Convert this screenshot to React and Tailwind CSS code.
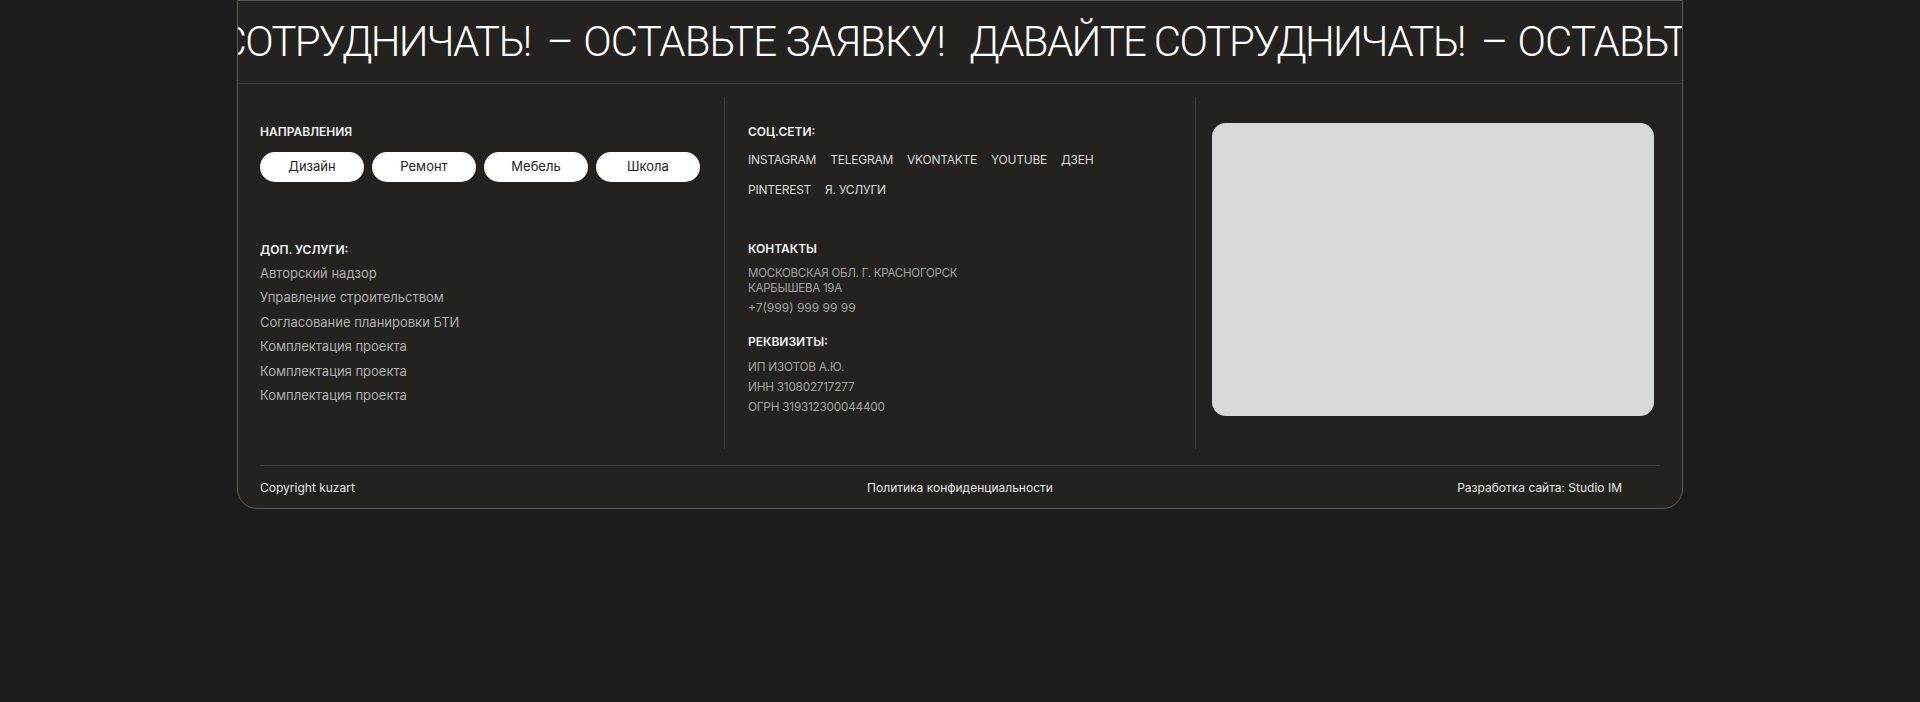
import React from "react";

const directions = ["Дизайн", "Ремонт", "Мебель", "Школа"];

const services = [
    "Авторский надзор",
    "Управление строительством",
    "Согласование планировки БТИ",
    "Комплектация проекта",
    "Комплектация проекта",
    "Комплектация проекта",
];

const socialsTop = ["INSTAGRAM", "TELEGRAM", "VKONTAKTE", "YOUTUBE", "ДЗЕН"];
const socialsBottom = ["PINTEREST", "Я. УСЛУГИ"];

const requisites = ["ИП ИЗОТОВ А.Ю.", "ИНН 310802717277", "ОГРН 319312300044400"];

// одна "петля" бегущей строки
const TickerChunk = () => (
    <div className="flex items-center shrink-0 pr-[26px]">
        <span className="whitespace-nowrap">ДАВАЙТЕ СОТРУДНИЧАТЬ!</span>
        <span className="ml-[16px] mr-[11px]">–</span>
        <span className="whitespace-nowrap w-[360px] tracking-[-0.02em]">ОСТАВЬТЕ ЗАЯВКУ!</span>
    </div>
);

const App = () => {
    return (
        <div className="min-h-screen bg-[#1b1c1b] font-['Inter',sans-serif]">
            <footer className="w-[1446px] mx-auto bg-[#23221f] border border-[#5a5a58] rounded-b-[20px] overflow-hidden">
                {/* бегущая строка */}
                <div className="h-[83px] border-b border-[#3a3936] overflow-hidden flex items-center">
                    <div className="flex -ml-[203px] text-white font-['Roboto',sans-serif] font-light text-[42px] tracking-[-0.04em] leading-none">
                        <TickerChunk />
                        <TickerChunk />
                        <TickerChunk />
                    </div>
                </div>

                <div className="flex pt-[13px] pl-[22px]">
                    {/* направления + доп. услуги */}
                    <div className="w-[465px] h-[352px] border-r border-[#3d3c39] pt-[27px]">
                        <h4 className="text-[12px] leading-[16px] font-semibold text-[#f2f2f2]">НАПРАВЛЕНИЯ</h4>
                        <div className="flex gap-[8px] mt-[12px]">
                            {directions.map((d) => (
                                <button
                                    key={d}
                                    className="w-[104px] h-[30px] rounded-full bg-white text-[#222] text-[13px]"
                                >
                                    {d}
                                </button>
                            ))}
                        </div>

                        <h4 className="mt-[60px] text-[12px] leading-[16px] font-semibold text-[#f2f2f2]">ДОП. УСЛУГИ:</h4>
                        <ul className="mt-[3px]">
                            {services.map((s, i) => (
                                <li key={i} className="text-[13px] leading-[24.4px] text-[#b0b0ae]">
                                    {s}
                                </li>
                            ))}
                        </ul>
                    </div>

                    {/* соцсети, контакты, реквизиты */}
                    <div className="w-[471px] h-[352px] border-r border-[#3d3c39] pt-[27px] pl-[23px]">
                        <h4 className="text-[12px] leading-[16px] font-semibold text-[#f2f2f2]">СОЦ.СЕТИ:</h4>
                        <div className="flex gap-x-[14px] mt-[12px] text-[12px] leading-[16px] tracking-[-0.02em] text-[#dadad8]">
                            {socialsTop.map((s) => (
                                <a key={s} href="#">{s}</a>
                            ))}
                        </div>
                        <div className="flex gap-x-[14px] mt-[14px] text-[12px] leading-[16px] tracking-[-0.02em] text-[#dadad8]">
                            {socialsBottom.map((s) => (
                                <a key={s} href="#">{s}</a>
                            ))}
                        </div>

                        <h4 className="mt-[43px] text-[12px] leading-[16px] font-semibold text-[#f2f2f2]">КОНТАКТЫ</h4>
                        <p className="mt-[9px] text-[11.5px] leading-[14.5px] tracking-[-0.02em] text-[#a2a2a0]">
                            МОСКОВСКАЯ ОБЛ. Г. КРАСНОГОРСК
                            <br />
                            КАРБЫШЕВА 19А
                        </p>
                        <p className="mt-[5px] text-[12px] leading-[16px] text-[#a2a2a0]">+7(999) 999 99 99</p>

                        <h4 className="mt-[18px] text-[12px] leading-[16px] font-semibold text-[#f2f2f2]">РЕКВИЗИТЫ:</h4>
                        <ul className="mt-[7px]">
                            {requisites.map((r) => (
                                <li key={r} className="text-[11.8px] leading-[20px] tracking-[-0.02em] text-[#a2a2a0]">
                                    {r}
                                </li>
                            ))}
                        </ul>
                    </div>

                    {/* карта */}
                    <div className="pl-[16px] pt-[26px]">
                        <div className="w-[442px] h-[293px] rounded-[14px] bg-[#d9d9d9]" />
                    </div>
                </div>

                <div className="mx-[22px] mt-[16px] border-t border-[#3d3c39] pt-[14px] pb-[12px] grid grid-cols-3 text-[12px] leading-[16px] text-[#e6e6e4]">
                    <span>Copyright kuzart</span>
                    <a href="#" className="text-center">Политика конфиденциальности</a>
                    <span className="text-right pr-[38px]">Разработка сайта: Studio IM</span>
                </div>
            </footer>
        </div>
    );
};

export default App;
